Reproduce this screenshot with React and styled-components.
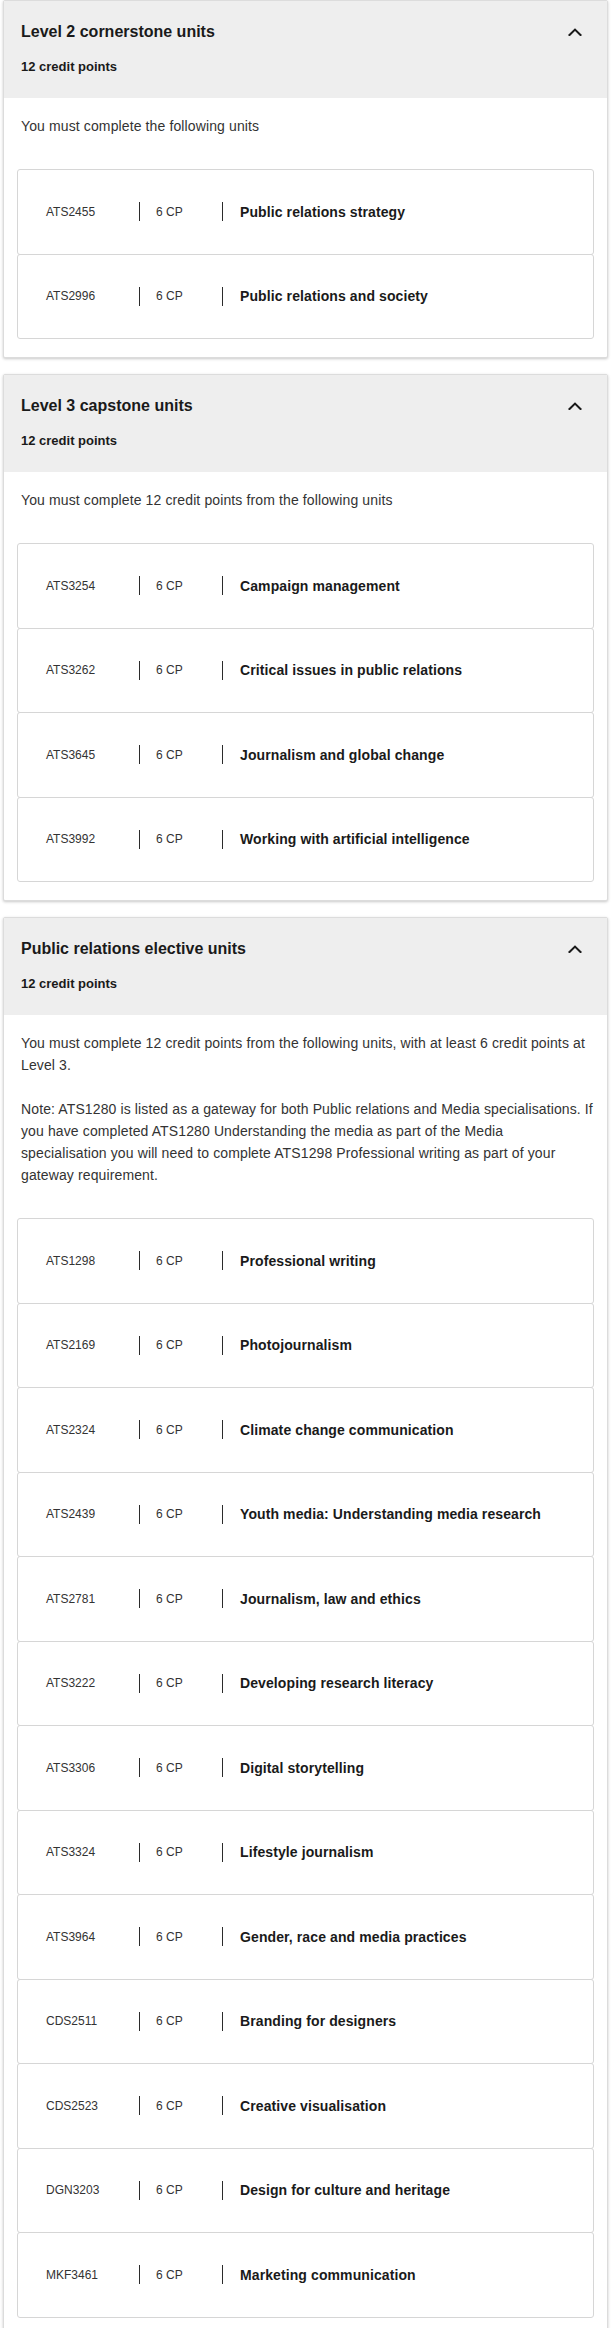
import React from 'react';
import styled, { createGlobalStyle } from 'styled-components';

const COLORS = {
  white: '#FFFFFF',
  headerBg: '#EEEEEE',
  cardBorder: '#DCDCDC',
  rowBorder: '#D6D6D6',
  text: '#333333',
  heading: '#1A1A1A',
  sep: '#2B2B2B',
};

const GlobalStyle = createGlobalStyle`
  html, body { margin: 0; padding: 0; background: ${COLORS.white}; }
  body {
    font-family: 'Liberation Sans', Arial, Helvetica, sans-serif;
    color: ${COLORS.text};
  }
  * { box-sizing: border-box; }
`;

/* ---------- Layout ---------- */
const Page = styled.main`
  padding: 0 4px 0 3px;
  display: flex;
  flex-direction: column;
  gap: 16px;
`;

const Card = styled.section`
  background: ${COLORS.white};
  border: 1px solid ${COLORS.cardBorder};
  border-radius: 2px;
  box-shadow: 0 1px 3px rgba(0, 0, 0, 0.22);
  overflow: hidden;
`;

const Header = styled.div`
  background: ${COLORS.headerBg};
  padding: 19px 25px 22px 17px;
  display: flex;
  flex-direction: column;
  gap: 14px;
`;

const TitleRow = styled.div`
  display: flex;
  align-items: center;
  justify-content: space-between;
`;

const Title = styled.h3`
  margin: 0;
  font-size: 16px;
  line-height: 24px;
  font-weight: 700;
  color: ${COLORS.heading};
`;

const Credits = styled.div`
  font-size: 13px;
  line-height: 18px;
  font-weight: 700;
  color: ${COLORS.heading};
`;

const Toggle = styled.span`
  display: inline-flex;
  width: 14px;
  height: 8px;
  color: ${COLORS.heading};
`;

const Body = styled.div`
  padding: 17px 13px 18px;
`;

const Desc = styled.div`
  padding: 0 0 0 4px;
  margin-bottom: 32px;
  font-size: 14px;
  line-height: 22px;
  letter-spacing: 0.12px;
  color: ${COLORS.text};

  p { margin: 0; }
  p + p { margin-top: 22px; }
`;

const UnitList = styled.ul`
  list-style: none;
  margin: 0;
  padding: 0;
`;

const UnitRow = styled.li`
  height: 85.5px;
  display: flex;
  align-items: center;
  padding: 0 28px;
  border: 1px solid ${COLORS.rowBorder};
  border-radius: 3px;
  background: ${COLORS.white};

  & + & { margin-top: -1px; }
`;

const Code = styled.span`
  flex: 0 0 93px;
  font-size: 12px;
  color: ${COLORS.text};
`;

const Sep = styled.span`
  flex: 0 0 1px;
  height: 19px;
  background: ${COLORS.sep};
`;

const Points = styled.span`
  flex: 0 0 82px;
  padding-left: 16px;
  font-size: 12px;
  color: ${COLORS.text};
`;

const UnitName = styled.span`
  padding-left: 17px;
  font-size: 14px;
  font-weight: 700;
  letter-spacing: 0.1px;
  color: ${COLORS.heading};
`;

/* ---------- Data ---------- */
const GROUPS = [
  {
    title: 'Level 2 cornerstone units',
    credits: '12 credit points',
    desc: [<>You must complete the following units</>],
    units: [
      ['ATS2455', 'Public relations strategy'],
      ['ATS2996', 'Public relations and society'],
    ],
  },
  {
    title: 'Level 3 capstone units',
    credits: '12 credit points',
    desc: [<>You must complete 12 credit points from the following units</>],
    units: [
      ['ATS3254', 'Campaign management'],
      ['ATS3262', 'Critical issues in public relations'],
      ['ATS3645', 'Journalism and global change'],
      ['ATS3992', 'Working with artificial intelligence'],
    ],
  },
  {
    title: 'Public relations elective units',
    credits: '12 credit points',
    desc: [
      <>You must complete 12 credit points from the following units, with at least 6 credit points at Level 3.</>,
      <>
        Note: ATS1280 is listed as a gateway for both Public relations and Media specialisations. If you have
        completed ATS1280 Understanding the media as part of the Media<br />
        specialisation you will need to complete ATS1298 Professional writing as part of your<br />
        gateway requirement.
      </>,
    ],
    units: [
      ['ATS1298', 'Professional writing'],
      ['ATS2169', 'Photojournalism'],
      ['ATS2324', 'Climate change communication'],
      ['ATS2439', 'Youth media: Understanding media research'],
      ['ATS2781', 'Journalism, law and ethics'],
      ['ATS3222', 'Developing research literacy'],
      ['ATS3306', 'Digital storytelling'],
      ['ATS3324', 'Lifestyle journalism'],
      ['ATS3964', 'Gender, race and media practices'],
      ['CDS2511', 'Branding for designers'],
      ['CDS2523', 'Creative visualisation'],
      ['DGN3203', 'Design for culture and heritage'],
      ['MKF3461', 'Marketing communication'],
    ],
  },
];

const ChevronUp = () => (
  <svg width="14" height="8" viewBox="0 0 14 8" fill="none" aria-hidden>
    <polyline points="1.5,7 7,1.6 12.5,7" stroke="currentColor" strokeWidth="2.1" strokeLinecap="square" />
  </svg>
);

const UnitGroup = ({ group }) => (
  <Card>
    <Header>
      <TitleRow>
        <Title>{group.title}</Title>
        <Toggle><ChevronUp /></Toggle>
      </TitleRow>
      <Credits>{group.credits}</Credits>
    </Header>
    <Body>
      <Desc>
        {group.desc.map((d, i) => <p key={i}>{d}</p>)}
      </Desc>
      <UnitList>
        {group.units.map(([code, name]) => (
          <UnitRow key={code}>
            <Code>{code}</Code>
            <Sep />
            <Points>6 CP</Points>
            <Sep />
            <UnitName>{name}</UnitName>
          </UnitRow>
        ))}
      </UnitList>
    </Body>
  </Card>
);

export default function App() {
  return (
    <>
      <GlobalStyle />
      <Page>
        {GROUPS.map(g => <UnitGroup key={g.title} group={g} />)}
      </Page>
    </>
  );
}
